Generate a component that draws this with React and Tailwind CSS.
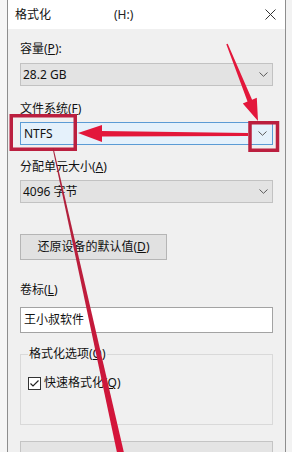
import React from "react";

const font = "font-['Noto_Sans','Noto_Sans_CJK_SC',sans-serif]";

function Chevron() {
  return (
    <svg width="9" height="5" viewBox="0 0 9 5" className="shrink-0">
      <path d="M0.5 0.5 L4.5 4.3 L8.5 0.5" stroke="#5a5a5a" strokeWidth="1" fill="none" />
    </svg>
  );
}

function Combo({ children, focused }) {
  return (
    <div
      className={
        focused
          ? "h-[23px] w-[253px] border border-[#5b9bd5] bg-[#e5f1fb] flex items-center justify-between pl-[3px] pr-[5px]"
          : "h-[23px] w-[253px] border border-[#c2c2c2] bg-[#e3e3e3] flex items-center justify-between pl-[2px] pr-[4px]"
      }
    >
      <span className="text-[12px] leading-[16px] text-[#111]">{children}</span>
      <Chevron />
    </div>
  );
}

function Label({ children, className = "" }) {
  return <div className={"text-[12px] leading-[16px] text-[#111] " + className}>{children}</div>;
}

export default function App() {
  return (
    <div className={"relative w-[292px] h-[452px] overflow-hidden bg-[#f4f4f4] flex " + font}>
      <div className="w-[7px] shrink-0 bg-[#f6f6f6]" />
      <div className="w-[279px] shrink-0 border-x border-[#8e8e8e] flex flex-col bg-[#f0f0f0]">
        {/* title bar */}
        <div className="h-[29px] shrink-0 bg-white flex items-center pl-[7px] pr-[9px]">
          <span className="text-[12px] leading-[16px] text-[#111]">格式化</span>
          <span className="ml-[63px] text-[12px] leading-[16px] text-[#222]">(H:)</span>
          <div className="flex-1" />
          <svg width="11" height="11" viewBox="0 0 11 11">
            <path d="M0.5 0.5 L10.5 10.5 M10.5 0.5 L0.5 10.5" stroke="#333" strokeWidth="1" />
          </svg>
        </div>
        {/* body */}
        <div className="flex flex-col pl-[12px] pr-[12px] pt-[12px]">
          <Label>
            容量(<u>P</u>):
          </Label>
          <div className="mt-[6px]">
            <Combo>28.2 GB</Combo>
          </div>
          <Label className="mt-[15px]">
            文件系统(<u>F</u>)
          </Label>
          <div className="mt-[5px]">
            <Combo focused>NTFS</Combo>
          </div>
          <Label className="mt-[14px]">
            分配单元大小(<u>A</u>)
          </Label>
          <div className="mt-[5px]">
            <Combo>4096 字节</Combo>
          </div>
          <div className="mt-[31px] h-[26px] w-[147px] border border-[#b5b5b5] bg-[#e1e1e1] flex items-center justify-center text-[12px] leading-[16px] text-[#111]">
            还原设备的默认值(<u>D</u>)
          </div>
          <Label className="mt-[22px]">
            卷标(<u>L</u>)
          </Label>
          <div className="mt-[9px] h-[26px] w-[253px] border border-[#a3a3a3] bg-white flex items-center pl-[3px] text-[12px] leading-[16px] text-[#111]">
            王小叔软件
          </div>
          <fieldset className="mt-[13px] w-[253px] border border-[#d9d9d9] pl-[7px] pb-[33px]">
            <legend className="px-[1px] text-[12px] leading-[16px] text-[#111]">
              格式化选项(<u>O</u>)
            </legend>
            <div className="mt-[13px] flex items-center h-[16px]">
              <svg width="13" height="13" viewBox="0 0 13 13" className="shrink-0">
                <rect x="0.5" y="0.5" width="12" height="12" fill="white" stroke="#333" />
                <path d="M2.5 6.5 L5 9 L10.5 3.5" stroke="#222" strokeWidth="1.2" fill="none" />
              </svg>
              <span className="ml-[3px] text-[12px] leading-[16px] text-[#111]">
                快速格式化(<u>Q</u>)
              </span>
            </div>
          </fieldset>
          <div className="mt-[16px] h-[30px] w-[253px] border border-[#c4c4c4] bg-[#e4e4e4]" />
        </div>
      </div>
      <div className="flex-1 bg-[#f2f2f2]" />

      {/* annotation overlay */}
      <svg className="absolute inset-0 pointer-events-none" width="292" height="452" viewBox="0 0 292 452">
        <defs>
          <linearGradient id="lg" x1="0" y1="147" x2="0" y2="455" gradientUnits="userSpaceOnUse">
            <stop offset="0" stopColor="#a8243d" />
            <stop offset="1" stopColor="#d8133a" />
          </linearGradient>
        </defs>
        {/* red boxes */}
        <rect x="11.25" y="115.75" width="64" height="33.5" fill="none" stroke="#bb1f3f" strokeWidth="3.5" />
        <rect x="250" y="122.75" width="27.5" height="27.5" fill="none" stroke="#bb1f3f" strokeWidth="3.5" />
        {/* horizontal arrow */}
        <polygon
          points="78,133 102,125 102,131 248,133 248,136 102,136.5 102,142"
          fill="#e3173b"
        />
        {/* diagonal arrow */}
        <polygon
          points="227.7,43.7 252.1,99.7 256.8,97.8 258,121 242.8,103.4 247.5,101.5 226.3,44.3"
          fill="#e3173b"
        />
        {/* long line */}
        <polygon points="52.5,148 53.5,148 124.5,455 117.5,455" fill="url(#lg)" />
      </svg>
    </div>
  );
}
